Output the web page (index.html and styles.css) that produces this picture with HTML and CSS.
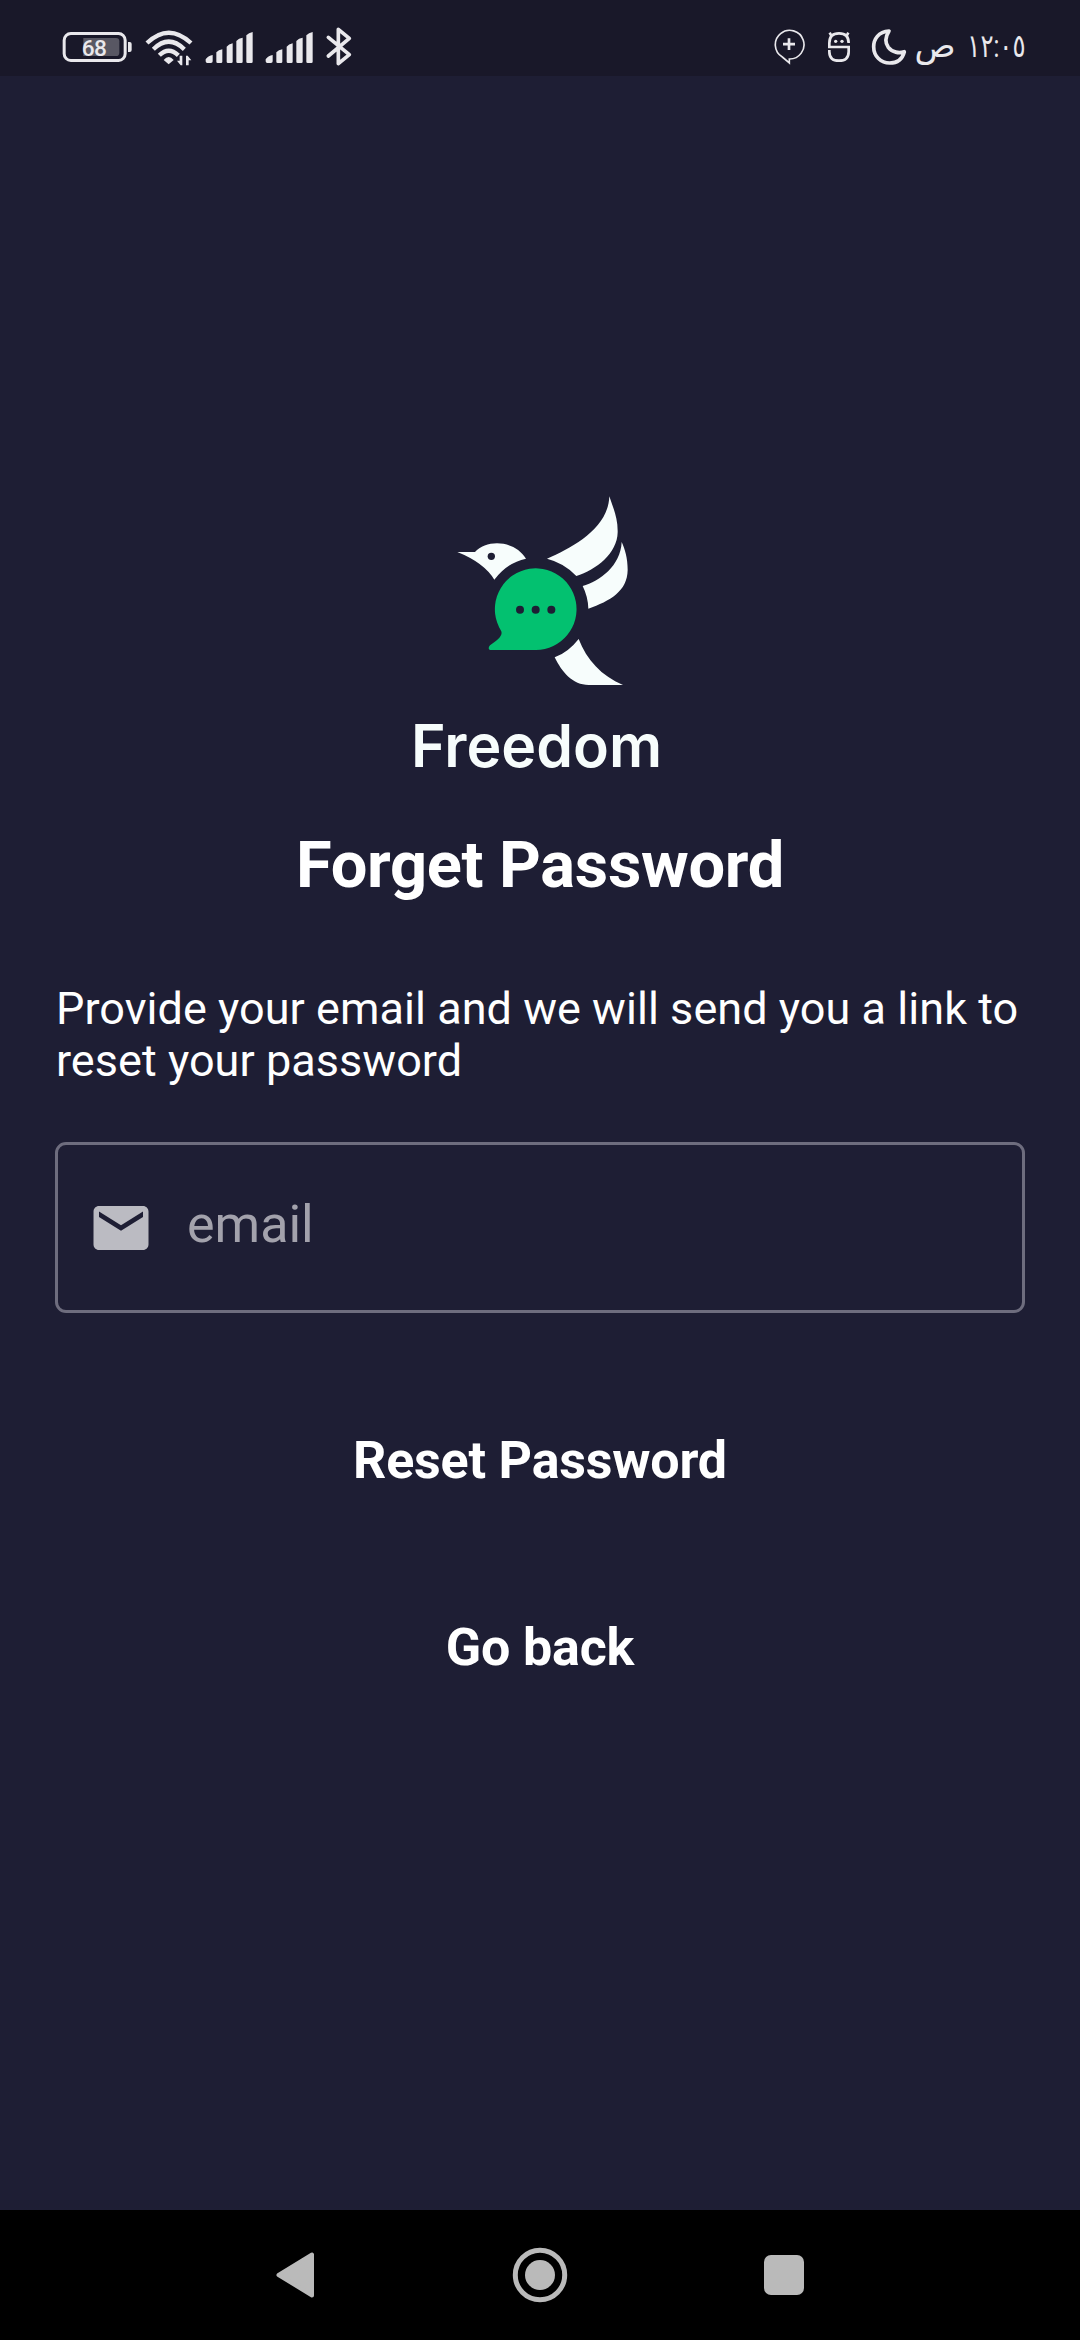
FILE: index.html
```html
<!DOCTYPE html>
<html lang="en">
<head>
<meta charset="utf-8">
<title>Forget Password</title>
<link rel="stylesheet" href="styles.css">
</head>
<body>
<div class="screen">
  <header class="status">
    <div class="status-group">
      <svg class="battery" viewBox="60 0 225 198">
        <rect x="72.500" y="70.500" width="183" height="81" rx="20" fill="none" stroke="#e9e8ec" stroke-width="9"/>
        <path d="M264 96h5q6 0 6 6v18q0 6-6 6h-5z" fill="#e9e8ec"/>
        <path d="M130 84h98q10 0 10 10v34q0 10-10 10h-98z" fill="#585763"/>
        <text x="162" y="137" class="battery-text">68</text>
      </svg>
      <svg class="wifi" viewBox="300 0 165 198">
        <g fill="none" stroke="#e9e8ec" stroke-width="13">
          <path d="M321 99Q386 37 453 99"/>
          <path d="M340 118Q386 72 433 118"/>
          <path d="M358 136Q386 108 415 136"/>
        </g>
        <path d="M371 150Q386 132 401 150L386 163z" fill="#e9e8ec"/>
        <path d="M427 137v29h-5l-11-14h8v-15zM438 166v-29h5l11 14h-8v15z" fill="#e9e8ec"/>
      </svg>
      <svg class="signal" viewBox="480 0 165 198"><path id="bars" fill="#e9e8ec" d="M497 148Q506 136 518 135V154Q518 159 513 159H502Q497 159 497 154zM529 127Q536 119 547 118V155Q547 159 543 159H533Q529 159 529 155zM560 110Q566 102 578 100V155Q578 159 574 159H564Q560 159 560 155zM589 93Q596 84 608 83V155Q608 159 604 159H593Q589 159 589 155zM619 76Q626 68 638 66V155Q638 159 634 159H623Q619 159 619 155z"/></svg>
      <svg class="signal" viewBox="480 0 165 198"><use href="#bars"/></svg>
      <svg class="bluetooth" viewBox="840 0 105 198"><path d="M865 82L928 134L895 161V58L928 85L865 138" fill="none" stroke="#e9e8ec" stroke-width="11" stroke-linejoin="round" stroke-linecap="round"/></svg>
    </div>
    <div class="status-group status-right">
      <svg class="add" viewBox="60 0 105 198"><g fill="none" stroke="#e9e8ec"><path d="M118 159V147A43 43 0 1 0 97 141Z" stroke-width="5"/><path d="M117 85V120M99 102.500H135" stroke-width="8"/></g></svg>
      <svg class="robot" viewBox="225 0 90 198"><g fill="none" stroke="#e9e8ec" stroke-width="8"><path d="M296 99Q296 70 267 70T238 99V111H296V125Q296 152 267 152T238 125V120"/><path d="M245 79L239 68M289 79L295 68"/></g><circle cx="257" cy="94" r="5" fill="#e9e8ec"/><circle cx="276" cy="94" r="5" fill="#e9e8ec"/></svg>
      <svg class="moon" viewBox="360 0 120 198"><path d="M417 63C385 65 371 88 371 110C371 139 393 159 419 159C441 159 457 148 463 125C447 131 427 127 415 112C404 97 407 79 417 63Z" fill="none" stroke="#e9e8ec" stroke-width="11" stroke-linejoin="round"/></svg>
      <div class="time" dir="rtl" lang="ar"><span class="digits">١٢:٠٥</span> <span class="period">ص</span></div>
    </div>
  </header>
  <main class="content">
    <svg class="logo" viewBox="-15 0 630 660">
      <g fill="#f7fdfc">
        <path d="M52 216H105C140 177 224 180 258 236Q203 247 163 299Q132 248 52 216Z"/>
        <path d="M508 49C518 80 534 112 533 157C532 220 469 270 409 288Q373 249 321 236C400 202 505 144 508 49Z"/>
        <path d="M545 186C555 208 563 234 563 270C562 334 510 363 445 386Q444 350 428 318C479 303 542 258 545 186Z"/>
        <path d="M416 477C440 540 484 587 549 615H446C398 615 366 577 344 532Q384 518 416 477Z"/>
      </g>
      <circle cx="154" cy="229" r="11" fill="#1e1e34"/>
      <path d="M183 452A122.500 122.500 0 1 1 288 510H151Q146 510 146 505T150 496C170 481 191 467 183 452Z" fill="#03c170"/>
      <g fill="#1e1e34"><circle cx="240" cy="389" r="12"/><circle cx="287" cy="389" r="12"/><circle cx="334" cy="389" r="12"/></g>
    </svg>
    <div class="brand">Freedom</div>
    <h1 class="title">Forget Password</h1>
    <p class="hint">Provide your email and we will send you a link to<br>reset your password</p>
    <div class="field">
      <svg class="mail" viewBox="0 0 24 24"><path fill="#bbbbc2" d="M20 4H4c-1.100 0-1.990.9-1.990 2L2 18c0 1.100.9 2 2 2h16c1.100 0 2-.9 2-2V6c0-1.100-.9-2-2-2zm0 4l-8 5-8-5V6l8 5 8-5v2z"/></svg>
      <span class="placeholder">email</span>
    </div>
    <div class="action reset">Reset Password</div>
    <div class="action back">Go back</div>
  </main>
  <nav class="nav">
    <svg viewBox="0 0 60 60"><path d="M46 9.500V50.500L12.500 30Z" fill="#bababa" stroke="#bababa" stroke-width="4" stroke-linejoin="round"/></svg>
    <svg viewBox="0 0 60 60"><circle cx="30" cy="30" r="24.700" fill="none" stroke="#bababa" stroke-width="5"/><circle cx="30" cy="30" r="15" fill="#bababa"/></svg>
    <svg viewBox="0 0 60 60"><rect x="10" y="10" width="40" height="40" rx="7" fill="#bababa"/></svg>
  </nav>
</div>
</body>
</html>
```
FILE: styles.css
```css
body { margin: 0; background: #1e1e34; font-family: Roboto, sans-serif; color: #fff; }
svg { display: block; flex: none; }
.screen { display: flex; flex-direction: column; width: 1080px; height: 2340px; overflow: hidden; }
.status { display: flex; justify-content: space-between; box-sizing: border-box; height: 76px; padding: 10px 55px 0 60px; background: #191829; }
.status-group { display: flex; gap: 5px; }
.status svg { height: 66px; }
.battery { width: 75px; }
.wifi, .signal { width: 55px; }
.bluetooth, .add { width: 35px; }
.robot { width: 30px; margin-left: 15px; }
.moon { width: 40px; margin-left: 10px; }
.battery-text { font-family: Roboto, sans-serif; font-size: 68px; font-weight: 500; letter-spacing: -2px; text-anchor: middle; fill: #e9e8ec; }
.time { width: 110px; padding-top: 2px; line-height: 66px; font-family: Roboto, "DejaVu Sans", sans-serif; font-size: 32px; color: #e9e8ec; white-space: nowrap; }
.digits { display: inline-block; margin-left: -15px; transform: scaleX(0.76); transform-origin: right; }
.period { font-size: 34px; }
.content { flex: 1; display: flex; flex-direction: column; padding: 404px 55px 0; }
.logo { width: 210px; height: 220px; align-self: center; }
.brand { margin-top: 6px; padding-right: 7px; line-height: 80px; font-family: Inter, sans-serif; font-size: 59px; font-weight: 600; text-align: center; color: #f7fdfc; }
.title { margin: 40px 0 0; line-height: 78px; font-size: 65px; font-weight: 700; letter-spacing: -0.3px; text-align: center; }
.hint { margin: 79px 0 0 1px; line-height: 52px; font-size: 45px; letter-spacing: 0.04px; white-space: nowrap; }
.field { display: flex; align-items: center; box-sizing: border-box; height: 171px; margin-top: 55px; padding-left: 30px; border: 3px solid #6e6d7e; border-radius: 11px; }
.mail { width: 66px; height: 66px; }
.placeholder { margin-left: 33px; padding-bottom: 6px; font-size: 52px; color: #a3a2ac; }
.action { line-height: 60px; font-size: 52px; font-weight: 700; letter-spacing: -0.2px; text-align: center; }
.reset { margin-top: 118px; }
.back { margin-top: 127px; }
.nav { display: flex; justify-content: center; align-items: center; gap: 184px; height: 130px; background: #000; }
.nav svg { width: 60px; height: 60px; }
```
